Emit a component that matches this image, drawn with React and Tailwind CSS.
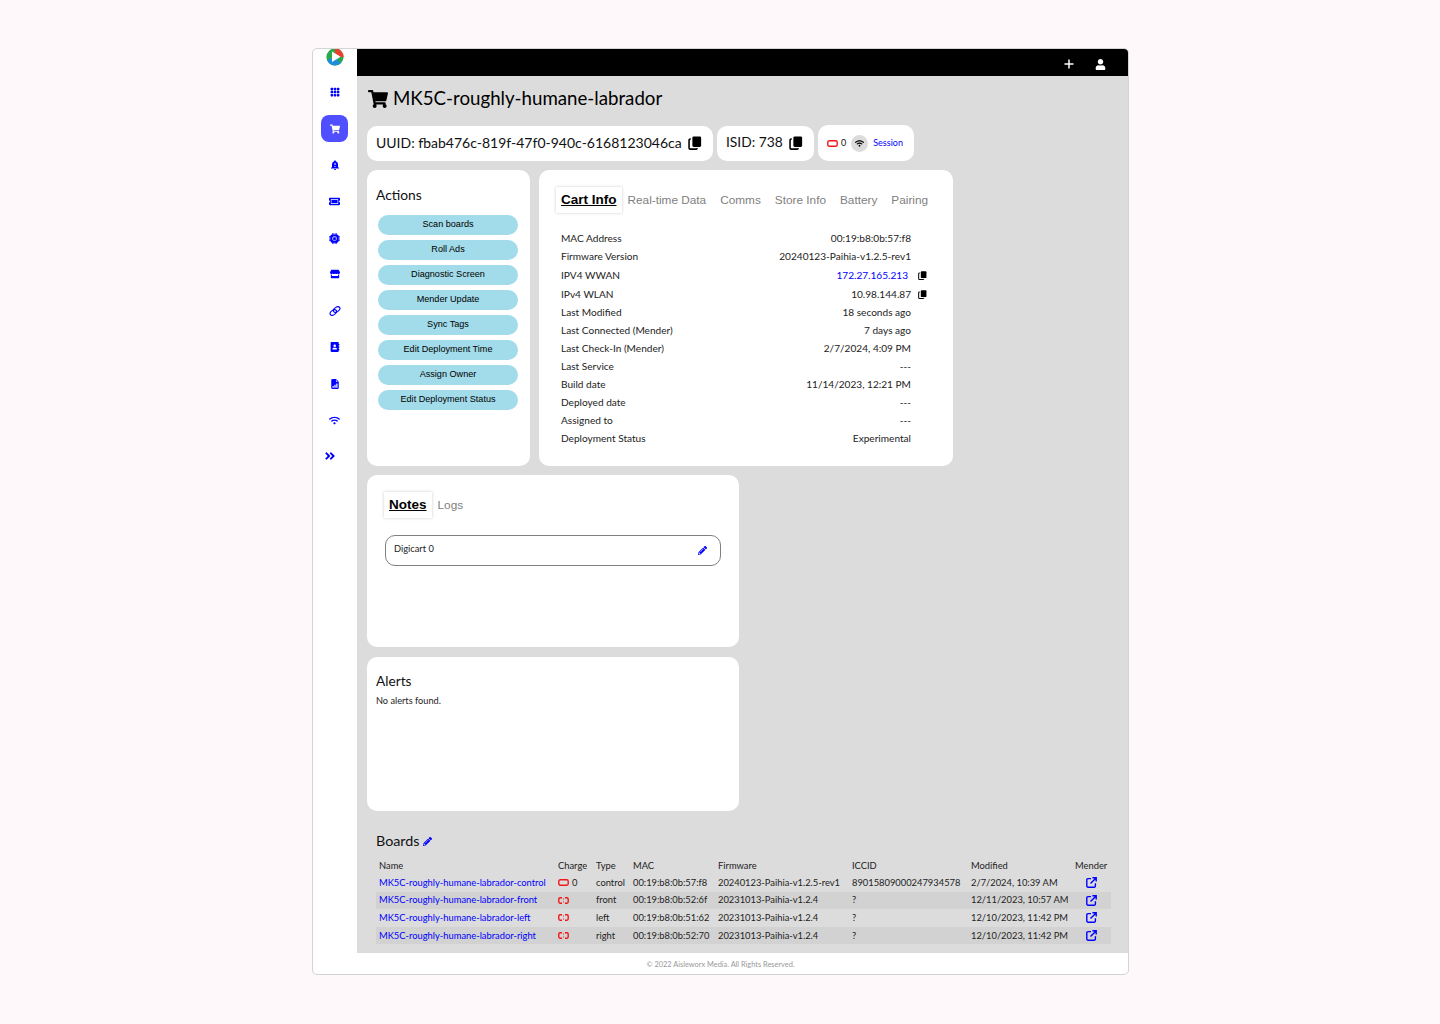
import React from "react";
import { FaShoppingCart, FaPencilAlt, FaUser, FaStore, FaTicketAlt, FaAngleDoubleRight, FaWifi, FaAddressBook } from "react-icons/fa";
import { BsGrid3X3GapFill, BsCpuFill, BsFileEarmarkBarGraphFill } from "react-icons/bs";
import { MdNotificationImportant } from "react-icons/md";

const nunito = "font-['Lato','Noto_Sans',sans-serif]";
const arial = "font-['Liberation_Sans',Arial,sans-serif]";

function Logo() {
  return (
    <svg width="18" height="18" viewBox="0 0 18 18">
      <circle cx="9" cy="9" r="8.6" fill="#2aa84a" />
      <path d="M9 .4A8.6 8.6 0 0 1 17.6 9H9z" fill="#e8402c" />
      <path d="M1 12A8.6 8.6 0 0 0 15 15L9 9z" fill="#1d8fd6" />
      <path d="M6 3.6l8.6 5.2L6 14z" fill="#fff" />
    </svg>
  );
}

function Battery({ broken }) {
  return broken ? (
    <svg width="11" height="7" viewBox="0 0 11 7" fill="none" stroke="#f01818" strokeWidth="1.4">
      <path d="M4 .8H2A1.3 1.3 0 0 0 .8 2v3A1.3 1.3 0 0 0 2 6.2h2M7 .8h2A1.3 1.3 0 0 1 10.2 2v3A1.3 1.3 0 0 1 9 6.2H7" />
      <path d="M5.500 1.500v1M5.500 4.500v1" strokeWidth="1" />
    </svg>
  ) : (
    <svg width="11" height="7" viewBox="0 0 11 7" fill="none" stroke="#f01818" strokeWidth="1.4">
      <rect x=".8" y=".8" width="9.400" height="5.400" rx="1.400" />
    </svg>
  );
}

function CopyIcon({ size }) {
  return (
    <svg width={size} height={size} viewBox="0 0 16 16" className="shrink-0 text-black">
      <rect x="5" y="0.5" width="10" height="12" rx="1.6" fill="currentColor" />
      <path d="M3.200 3.500H2.600A1.400 1.400 0 0 0 1.200 4.900v8.700A1.400 1.400 0 0 0 2.600 15h6.600a1.400 1.400 0 0 0 1.400-1.200" fill="none" stroke="currentColor" strokeWidth="1.8" />
    </svg>
  );
}

function LinkIcon({ size }) {
  return (
    <svg width={size} height={size} viewBox="0 0 16 16" fill="none" stroke="currentColor" strokeWidth="1.500">
      <ellipse cx="5.800" cy="10" rx="4.800" ry="3" transform="rotate(-35 5.800 10)" />
      <ellipse cx="10.200" cy="6" rx="4.800" ry="3" transform="rotate(-35 10.200 6)" />
    </svg>
  );
}

function ExternalIcon() {
  return (
    <svg width="11" height="11" viewBox="0 0 11 11" fill="none" stroke="#0000ff" strokeWidth="1.400" className="ml-[11px]">
      <path d="M5 1.600H2A1.200 1.200 0 0 0 .8 2.800V9A1.200 1.200 0 0 0 2 10.200h6.200A1.200 1.200 0 0 0 9.400 9V6.200" />
      <path d="M4.500 6.500L9.800 1.200M6.400 .8h3.800v3.800" />
    </svg>
  );
}

function PlusIcon() {
  return (
    <svg width="10" height="10" viewBox="0 0 10 10" fill="none" stroke="#fff" strokeWidth="1.500">
      <path d="M5 .5v9M.5 5h9" />
    </svg>
  );
}

const navIcons = [
  [BsGrid3X3GapFill, 10],
  [FaShoppingCart, 10, true],
  [MdNotificationImportant, 12],
  [FaTicketAlt, 11],
  [BsCpuFill, 11],
  [FaStore, 10],
  [LinkIcon, 12],
  [FaAddressBook, 10],
  [BsFileEarmarkBarGraphFill, 10],
  [FaWifi, 11],
];

const actions = ["Scan boards", "Roll Ads", "Diagnostic Screen", "Mender Update", "Sync Tags", "Edit Deployment Time", "Assign Owner", "Edit Deployment Status"];

const info = [
  ["MAC Address", "00:19:b8:0b:57:f8"],
  ["Firmware Version", "20240123-Paihia-v1.2.5-rev1"],
  ["IPV4 WWAN", "172.27.165.213", "link"],
  ["IPv4 WLAN", "10.98.144.87", "copy"],
  ["Last Modified", "18 seconds ago"],
  ["Last Connected (Mender)", "7 days ago"],
  ["Last Check-In (Mender)", "2/7/2024, 4:09 PM"],
  ["Last Service", "---"],
  ["Build date", "11/14/2023, 12:21 PM"],
  ["Deployed date", "---"],
  ["Assigned to", "---"],
  ["Deployment Status", "Experimental"],
];

const boards = [
  ["control", "00:19:b8:0b:57:f8", "20240123-Paihia-v1.2.5-rev1", "89015809000247934578", "2/7/2024, 10:39 AM", false],
  ["front", "00:19:b8:0b:52:6f", "20231013-Paihia-v1.2.4", "?", "12/11/2023, 10:57 AM", true],
  ["left", "00:19:b8:0b:51:62", "20231013-Paihia-v1.2.4", "?", "12/10/2023, 11:42 PM", true],
  ["right", "00:19:b8:0b:52:70", "20231013-Paihia-v1.2.4", "?", "12/10/2023, 11:42 PM", true],
];

function Tab({ active, children, className = "" }) {
  return active ? (
    <div className={`${arial} px-[5px] h-[26px] pt-[1px] flex items-center text-[13.5px] font-bold underline text-black shadow-[0_0_3px_rgba(0,0,0,0.2)] ${className}`}>{children}</div>
  ) : (
    <div className={`${arial} pt-[1px] text-[11.8px] text-[#808080] ${className}`}>{children}</div>
  );
}

export default function App() {
  return (
    <div className={`min-h-[1024px] bg-[#fff8fa] pt-12 ${nunito}`}>
      <div className="ml-[312px] w-[817px] h-[927px] bg-white border border-[#d4d4d4] rounded-[5px] overflow-hidden flex">
        <aside className="w-[44px] shrink-0 flex flex-col items-center">
          <div className="h-[18px] -translate-y-[1px]"><Logo /></div>
          <div className="flex flex-col items-center mt-[12px] -translate-x-[1px]">
            {navIcons.map(([Icon, size, active], i) => (
              <div key={i} className={`w-[27px] h-[27px] mb-[9.4px] flex items-center justify-center rounded-[8px] ${i === 0 ? "-translate-y-[1px]" : ""} ${active ? "bg-[#4f4fff] text-white" : "text-[#0000ff]"}`}>
                <span className="ml-[1px]"><Icon size={size} /></span>
              </div>
            ))}
            <div className="h-[27px] flex items-center text-[#0000ff] -translate-x-[4px]"><FaAngleDoubleRight size={12} /></div>
          </div>
        </aside>
        <div className="flex-1 min-w-0 flex flex-col">
          <header className="h-[27px] bg-black text-white flex items-center justify-end gap-[21px] pr-[22px] pt-[3px]">
            <PlusIcon />
            <FaUser size={11} />
          </header>
          <main className="h-[877px] bg-[#dcdcdc] pl-[10px] pr-[17px] flex flex-col">
            <div className="h-[45px] mb-[4px] flex items-center gap-[5px] pl-[1px] text-black">
              <FaShoppingCart size={20} />
              <h1 className="text-[18.700px] leading-none">MK5C-roughly-humane-labrador</h1>
            </div>
            <div className="flex gap-[4px] items-center text-[#111] h-[36px]">
              <div className="h-[35px] w-[346px] bg-white rounded-[10px] flex items-center pl-[9px] pb-[1px] gap-[6px] text-[14px]">
                <span className="whitespace-nowrap">UUID: fbab476c-819f-47f0-940c-6168123046ca</span><CopyIcon size={14} />
              </div>
              <div className="h-[35px] w-[97px] bg-white rounded-[10px] flex items-center pl-[9px] pb-[1px] gap-[6px] text-[13.800px]">
                <span className="whitespace-nowrap">ISID: 738</span><CopyIcon size={14} />
              </div>
              <div className="h-[36px] w-[96px] bg-white rounded-[10px] flex items-center pl-[9px] text-[9px]">
                <Battery /><span className="ml-[3px]">0</span>
                <span className="ml-[5px] w-[17px] h-[17px] rounded-full bg-[#dcdcdc] flex items-center justify-center text-black"><FaWifi size={9} /></span>
                <span className="ml-[5px] text-[#0000ff]">Session</span>
              </div>
            </div>
            <div className="flex gap-[9px] mt-[9px]">
              <section className="w-[163px] h-[296px] bg-white rounded-[10px] px-[9px] pt-[16px]">
                <h2 className="text-[13.800px] leading-[18px] text-[#111]">Actions</h2>
                <div className="mt-[11px] flex flex-col gap-[5px] pl-[2px]">
                  {actions.map((a) => (
                    <button key={a} className={`${arial} w-[140px] h-[20px] rounded-[10px] bg-[#a2dbe9] text-[9.100px] text-black`}>{a}</button>
                  ))}
                </div>
              </section>
              <section className="w-[414px] h-[296px] bg-white rounded-[10px] pl-[17px] pt-[17px]">
                <div className="flex items-center gap-[14px]">
                  <Tab active className="-mr-[8px]">Cart Info</Tab>
                  <Tab>Real-time Data</Tab>
                  <Tab>Comms</Tab>
                  <Tab>Store Info</Tab>
                  <Tab>Battery</Tab>
                  <Tab>Pairing</Tab>
                </div>
                <div className="mt-[17px] pl-[5px] w-[371px] text-[10.100px] text-[#222]">
                  {info.map(([l, v, t]) => (
                    <div key={l} className={`flex items-center justify-between ${t === "link" ? "h-[20px]" : "h-[18px]"}`}>
                      <span>{l}</span>
                      <span className="flex items-center">
                        <span className={t === "link" ? "text-[#0000ff] mr-[3px]" : ""}>{v}</span>
                        {t && <span className="ml-[7px]"><CopyIcon size={9} /></span>}
                        {!t && <span className="w-[16px]" />}
                      </span>
                    </div>
                  ))}
                </div>
              </section>
            </div>
            <section className="w-[372px] h-[172px] bg-white rounded-[10px] mt-[9px] pl-[17px] pt-[17px]">
              <div className="flex items-center gap-[6px]">
                <Tab active>Notes</Tab>
                <Tab>Logs</Tab>
              </div>
              <div className="mt-[17px] ml-[1px] w-[336px] h-[31px] border border-[#808080] rounded-[10px] flex justify-between pl-[8px] pr-[13px] pt-[6px] text-[9.300px] text-[#222]">
                <span>Digicart 0</span>
                <FaPencilAlt size={9} className="text-[#0000ff] mt-[4px]" />
              </div>
            </section>
            <section className="w-[372px] h-[154px] bg-white rounded-[10px] mt-[10px] pl-[9px] pt-[15px]">
              <h2 className="text-[13.700px] leading-[18px] text-[#111]">Alerts</h2>
              <p className="text-[9.200px] mt-[4px] text-[#222]">No alerts found.</p>
            </section>
            <div className="mt-[21px] pl-[9px] h-[18px] flex items-center gap-[4px] text-[14.300px] text-[#111]">
              Boards <FaPencilAlt size={9} className="text-[#0000ff]" />
            </div>
            <table className="mt-[8px] ml-[9px] w-[735px] table-fixed border-collapse text-[9.350px] text-[#222] text-left">
              <colgroup>
                <col className="w-[182px]" /><col className="w-[38px]" /><col className="w-[37px]" /><col className="w-[85px]" /><col className="w-[134px]" /><col className="w-[119px]" /><col className="w-[104px]" /><col className="w-[36px]" />
              </colgroup>
              <thead>
                <tr className="h-[16px]">
                  {["Name", "Charge", "Type", "MAC", "Firmware", "ICCID", "Modified", "Mender"].map((h, i) => (
                    <th key={h} className={`font-normal p-0 ${i === 0 ? "pl-[3px]" : ""}`}>{h}</th>
                  ))}
                </tr>
              </thead>
              <tbody>
                {boards.map(([t, mac, fw, icc, mod, broken], i) => (
                  <tr key={t} className={`h-[17.600px] ${i % 2 ? "bg-[#d2d2d2]" : ""}`}>
                    <td className="p-0 pl-[3px] text-[#0000ff] whitespace-nowrap">MK5C-roughly-humane-labrador-{t}</td>
                    <td className="p-0"><span className="flex items-center gap-[3px]"><Battery broken={broken} />{broken ? "" : "0"}</span></td>
                    <td className="p-0">{t}</td>
                    <td className="p-0 whitespace-nowrap">{mac}</td>
                    <td className="p-0 whitespace-nowrap">{fw}</td>
                    <td className="p-0 whitespace-nowrap">{icc}</td>
                    <td className="p-0 whitespace-nowrap">{mod}</td>
                    <td className="p-0"><ExternalIcon /></td>
                  </tr>
                ))}
              </tbody>
            </table>
          </main>
          <footer className="flex-1 flex items-center justify-center pr-[44px] pt-[2px] text-[7.400px] text-[#999]">© 2022 Aisleworx Media. All Rights Reserved.</footer>
        </div>
      </div>
    </div>
  );
}
